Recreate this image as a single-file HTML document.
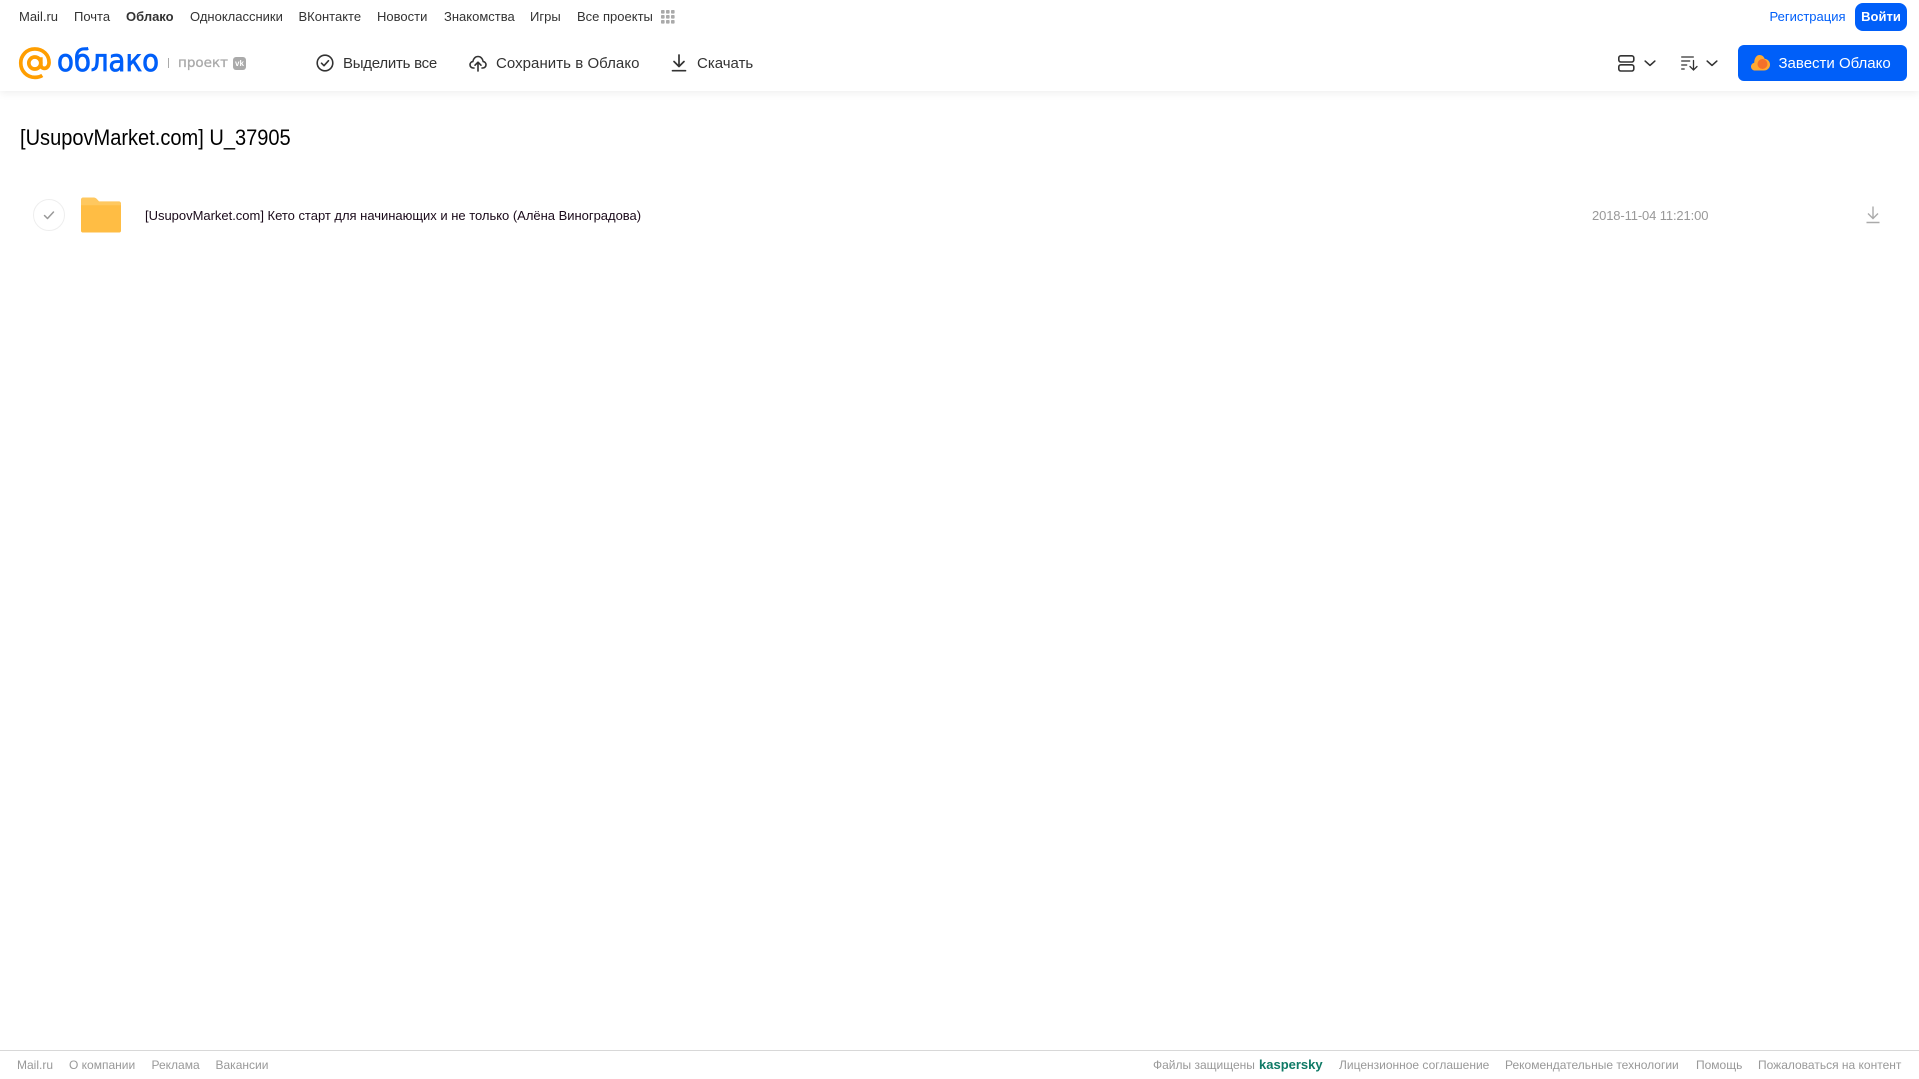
<!DOCTYPE html>
<html lang="ru"><head><meta charset="utf-8"><title>Облако</title>
<style>
html,body{margin:0;padding:0;background:#fff;width:1919px;height:1079px;overflow:hidden;font-family:"Liberation Sans",Arial,sans-serif}
.t{position:absolute;white-space:nowrap;line-height:16px}
.n{top:9px;font-size:13px;color:#333}
.b{top:55.500px;font-size:15px;color:#333}
.f{top:1057px;font-size:12px;color:#999}
svg{position:absolute;overflow:visible}
</style></head><body>
<div style="position:absolute;left:0;top:0;width:1919px;height:91px;background:#fff;box-shadow:0 2px 8px rgba(0,0,0,.07)"></div>

<span class="t n" style="left:19px">Mail.ru</span>
<span class="t n" style="left:74px">Почта</span>
<span class="t n" style="left:126px;font-weight:bold">Облако</span>
<span class="t n" style="left:190px">Одноклассники</span>
<span class="t n" style="left:298.500px">ВКонтакте</span>
<span class="t n" style="left:377px">Новости</span>
<span class="t n" style="left:444px">Знакомства</span>
<span class="t n" style="left:530px">Игры</span>
<span class="t n" style="left:577px">Все проекты</span>
<svg style="left:661px;top:10px" width="14" height="14" fill="#aaa"><rect x="0" y="0" width="3.600" height="3.600" rx=".8"/><rect x="5" y="0" width="3.600" height="3.600" rx=".8"/><rect x="10" y="0" width="3.600" height="3.600" rx=".8"/><rect x="0" y="5" width="3.600" height="3.600" rx=".8"/><rect x="5" y="5" width="3.600" height="3.600" rx=".8"/><rect x="10" y="5" width="3.600" height="3.600" rx=".8"/><rect x="0" y="10" width="3.600" height="3.600" rx=".8"/><rect x="5" y="10" width="3.600" height="3.600" rx=".8"/><rect x="10" y="10" width="3.600" height="3.600" rx=".8"/></svg>

<span class="t n" style="left:1769.500px;color:#005ff9">Регистрация</span>
<div style="position:absolute;left:1855px;top:3px;width:52px;height:28px;background:#005ff9;border-radius:8px;color:#fff;font-size:13px;font-weight:bold;line-height:27px;text-align:center">Войти</div>

<!-- logo -->
<svg style="left:19px;top:47px" width="32" height="33" viewBox="0 0 33 33" fill="none" stroke="#ff9e00" stroke-width="3.800"><circle cx="16.300" cy="16" r="6.200"/><path d="M22.500 10v7.500c0 2.600 1.500 4 3.600 4 2.700 0 4.900-2.400 4.900-6 0-8-6.300-14-14.700-14C8 1.500 1.800 8 1.800 16c0 8.400 6.400 14.800 14.700 14.800 3 0 5.300-.6 7.500-2"/></svg>
<span class="t" style="left:57px;top:44px;font-family:'DejaVu Sans',sans-serif;font-size:30px;line-height:36px;color:#005ff9;-webkit-text-stroke:.8px #005ff9;transform:scaleX(.92);transform-origin:0 0">облако</span>
<div style="position:absolute;left:168px;top:58px;width:1px;height:10px;background:#aaa"></div>
<span class="t" style="left:178px;top:55px;font-family:'DejaVu Sans',sans-serif;font-size:13.500px;color:#aaa;-webkit-text-stroke:.3px #aaa">проект</span>
<div style="position:absolute;left:233px;top:57px;width:13px;height:13px;border-radius:3px;background:#aaa;color:#fff;font-size:8px;font-weight:bold;line-height:13px;text-align:center">vk</div>

<!-- toolbar -->
<svg style="left:316px;top:54px" width="18" height="18" viewBox="0 0 18 18" fill="none" stroke="#333" stroke-width="1.600"><circle cx="9" cy="9" r="7.800"/><path d="M5.500 9.200l2.500 2.500 4.500-5" stroke-linecap="round" stroke-linejoin="round"/></svg>
<span class="t b" style="left:343px;letter-spacing:-.25px">Выделить все</span>
<svg style="left:469px;top:54px" width="18" height="18" viewBox="0 0 18 18" fill="none" stroke="#333" stroke-width="1.600" stroke-linecap="round" stroke-linejoin="round"><path d="M5 14H4.200C2.400 14 1 12.600 1 10.800c0-1.600 1.200-3 2.800-3.200C4.300 4.500 6.400 2.500 9 2.500s4.700 2 5.200 5.100c1.600.2 2.800 1.600 2.800 3.200 0 1.800-1.400 3.200-3.200 3.200H13"/><path d="M9 17V8.500M6 11.200l3-3 3 3"/></svg>
<span class="t b" style="left:496px;letter-spacing:.05px">Сохранить в Облако</span>
<svg style="left:671px;top:54px" width="16" height="18" viewBox="0 0 16 18" fill="none" stroke="#333" stroke-width="1.700" stroke-linecap="round" stroke-linejoin="round"><path d="M8 1v11M3 7.500L8 12.500l5-5M1.500 16.700h13"/></svg>
<span class="t b" style="left:697px">Скачать</span>

<!-- right controls -->
<svg style="left:1618px;top:55px" width="17" height="17" viewBox="0 0 17 17" fill="none" stroke="#333" stroke-width="1.600"><rect x=".8" y=".8" width="15" height="6.200" rx="2"/><rect x=".8" y="9.800" width="15" height="6.200" rx="2"/></svg>
<svg style="left:1644px;top:60px" width="12" height="7" viewBox="0 0 13 8" fill="none" stroke="#333" stroke-width="1.800" stroke-linecap="round" stroke-linejoin="round"><path d="M1 1.200l5.500 5 5.500-5"/></svg>
<svg style="left:1681px;top:56px" width="17" height="15" fill="none" stroke="#333" stroke-width="1.300" stroke-linecap="round"><path d="M.7 1h11.600M.7 5h8M.7 9h5M.7 13h2.500M12.500 4.500V13.500M9 10.500l3.500 3.500 3.500-3.500"/></svg>
<svg style="left:1706px;top:60px" width="12" height="7" viewBox="0 0 13 8" fill="none" stroke="#333" stroke-width="1.800" stroke-linecap="round" stroke-linejoin="round"><path d="M1 1.200l5.500 5 5.500-5"/></svg>
<div style="position:absolute;left:1738px;top:45px;width:169px;height:36px;background:#005ff9;border-radius:6px"></div>
<svg style="left:1751px;top:54px" width="19" height="17" viewBox="0 0 19 17"><path d="M4 16.500C1.800 16.500 0 14.800 0 12.600c0-2 1.400-3.500 3.200-3.900C3.400 4 5.500 1 8.500 1c2.500 0 4.400 1.500 5.100 3.800 3 .3 5.400 2.700 5.400 5.800 0 3.300-2.700 5.900-6 5.900z" fill="#ffa930"/><circle cx="11.500" cy="10" r="5" fill="#f4702a"/></svg>
<span class="t b" style="left:1778.500px;color:#fff">Завести Облако</span>

<!-- content -->
<span class="t" style="left:20px;top:125px;font-size:22px;line-height:26px;color:#000;transform:scaleX(.911);transform-origin:0 0">[UsupovMarket.com] U_37905</span>

<svg style="left:33px;top:199px" width="32" height="32" fill="none"><circle cx="16" cy="16" r="15.500" stroke="#eee"/><path d="M11.500 16.500l3 3 6-6.500" stroke="#999" stroke-width="1.500" stroke-linecap="round" stroke-linejoin="round"/></svg>
<svg style="left:81px;top:197px" width="40" height="36" viewBox="0 0 41 36"><path d="M2 0h11c1.500 0 2.500.6 3.500 1.800L18.500 4H39c1.100 0 2 .9 2 2v28c0 1.100-.9 2-2 2H2c-1.100 0-2-.9-2-2V2C0 .9.900 0 2 0z" fill="#ffc85f"/><path d="M0 8h41v26c0 1.100-.9 2-2 2H2c-1.100 0-2-.9-2-2z" fill="#ffbd44"/></svg>
<span class="t" style="left:145px;top:208px;font-size:13px;color:#1a0a1a;letter-spacing:-.016px">[UsupovMarket.com] Кето старт для начинающих и не только (Алёна Виноградова)</span>
<span class="t" style="left:1592px;top:208px;font-size:13px;color:#999;letter-spacing:-.13px">2018-11-04 11:21:00</span>
<svg style="left:1866px;top:206px" width="14" height="18" viewBox="0 0 14 18" fill="none" stroke="#aaa" stroke-width="1.400"><path d="M7 .5v12M2 7.500l5 5 5-5M.5 16.500h13"/></svg>

<!-- footer -->
<div style="position:absolute;left:0;top:1050px;width:1919px;height:1px;background:#d8d8d8"></div>
<span class="t f" style="left:17px">Mail.ru</span>
<span class="t f" style="left:69px">О компании</span>
<span class="t f" style="left:151.500px">Реклама</span>
<span class="t f" style="left:215.500px">Вакансии</span>
<span class="t f" style="left:1153px">Файлы защищены</span>
<span class="t f" style="left:1259px;font-weight:bold;color:#0f7a66;font-size:13px">kaspersky</span>
<span class="t f" style="left:1339px">Лицензионное соглашение</span>
<span class="t f" style="left:1505px">Рекомендательные технологии</span>
<span class="t f" style="left:1696px">Помощь</span>
<span class="t f" style="left:1758px">Пожаловаться на контент</span>
</body></html>
